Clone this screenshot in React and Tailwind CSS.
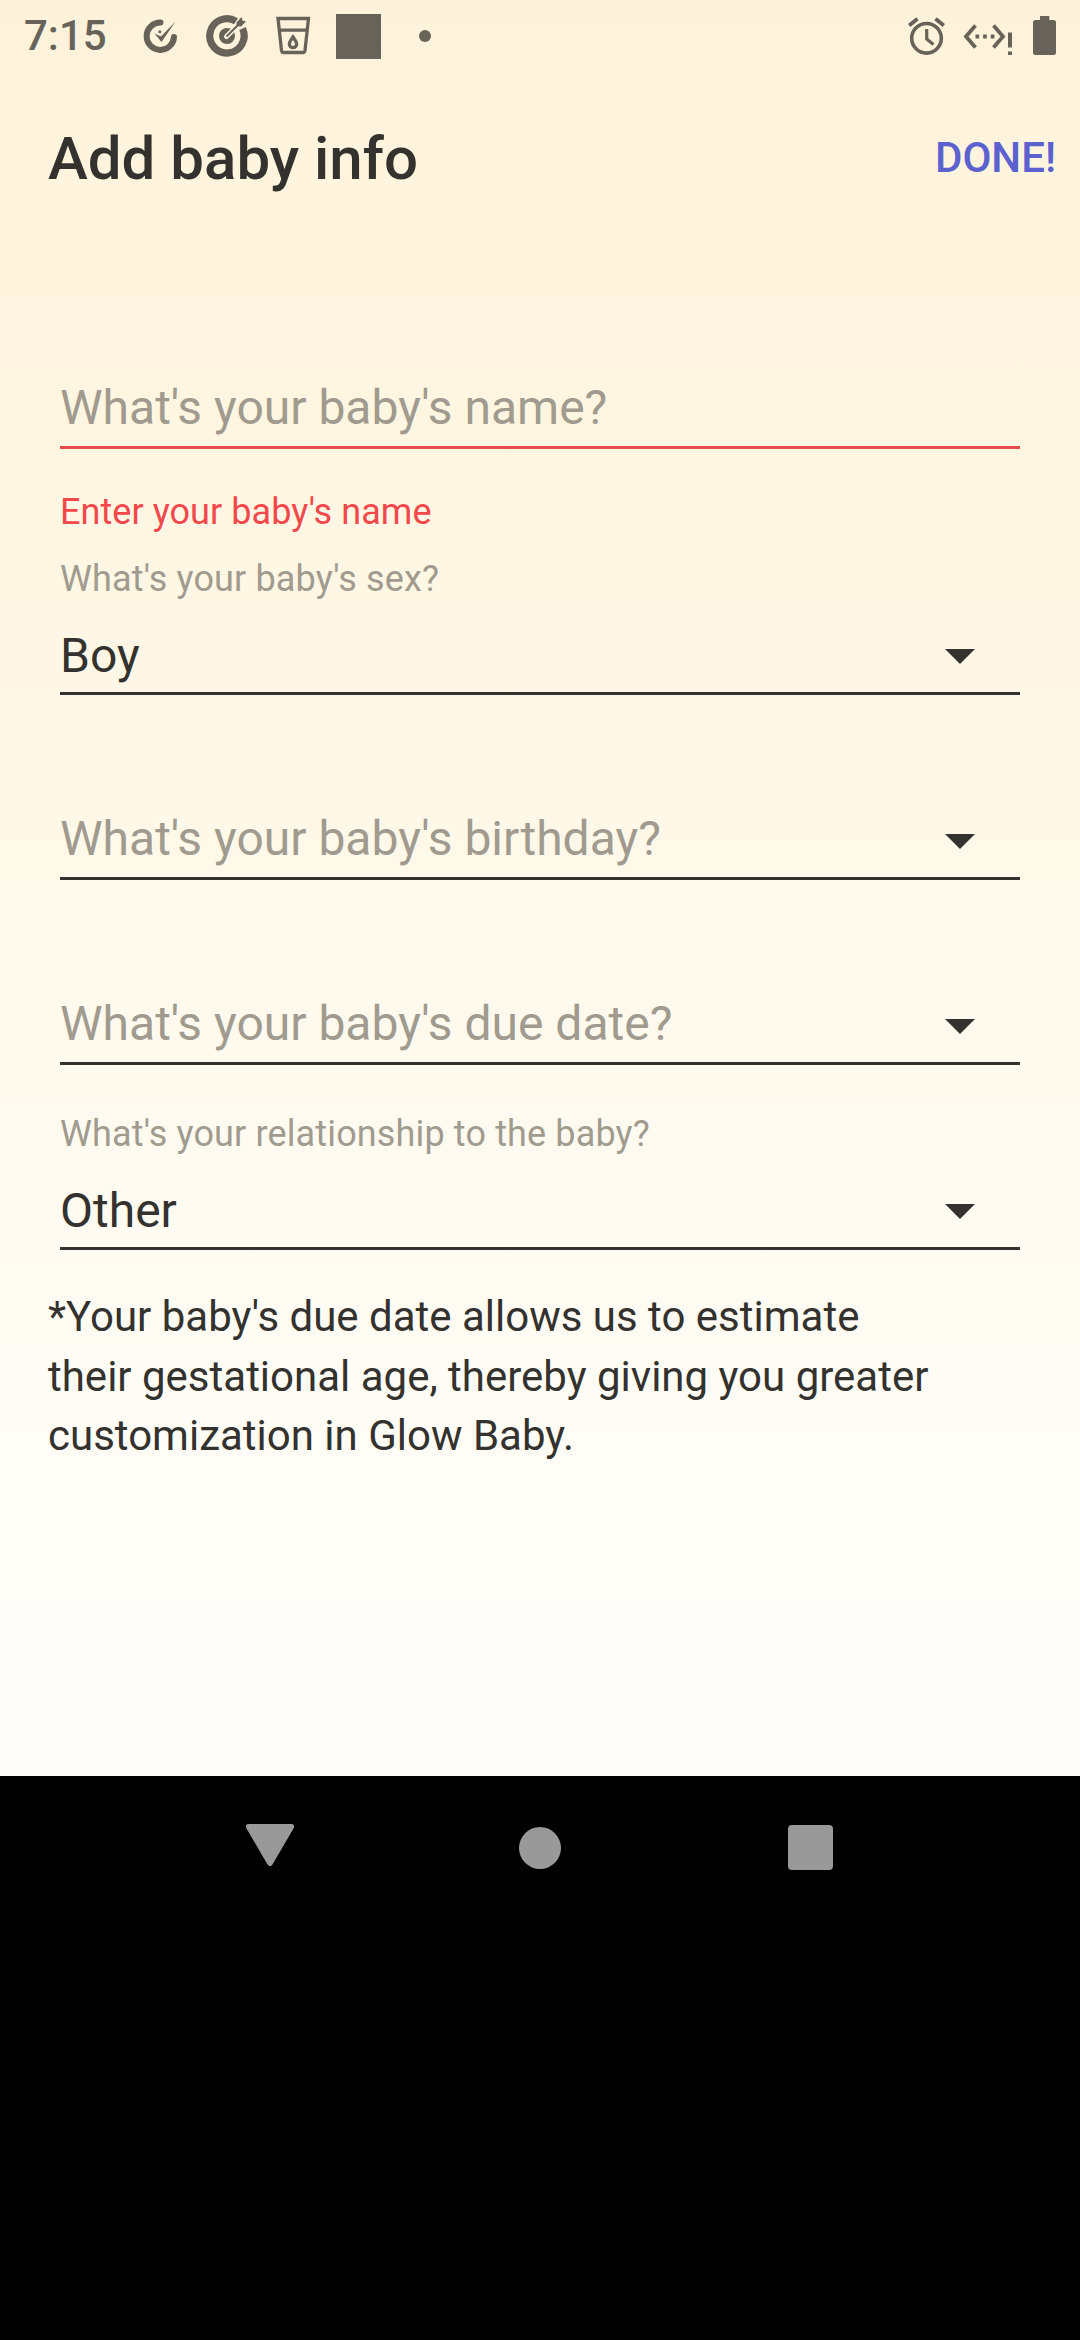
function StatusBar() {
  return (
    <header className="flex h-[72px] items-center text-[#676359]">
      <span className="ml-6 w-[113px] shrink-0 text-[42px] font-medium leading-[72px]">7:15</span>
      <svg className="h-[48px] w-[48px] shrink-0" viewBox="137 12 48 48" fill="none">
        <path d="M160.500 22.500A13.700 13.700 0 1 0 174 37" stroke="currentColor" strokeWidth="6" strokeLinecap="round" />
        <path d="M154.500 33.500L161 36.500L175.500 21.500L161.500 42Z" fill="currentColor" />
        <circle cx="159.800" cy="31.800" r="1.500" fill="currentColor" />
      </svg>
      <svg className="ml-[15px] h-[48px] w-[56px] shrink-0" viewBox="200 12 56 48" fill="none">
        <path d="M236 21.200A17.200 17.200 0 1 0 242.500 28.500" stroke="currentColor" strokeWidth="7.200" />
        <circle cx="227" cy="36" r="8" fill="currentColor" />
        <path d="M226.500 36.500L240 23" stroke="#fff2dc" strokeWidth="5" strokeLinecap="round" />
        <path d="M226.500 36.500L242 21" stroke="currentColor" strokeWidth="2" />
        <path d="M236.500 26V22.500L241.500 17L242.500 20.500L246 21.500L241 26.500Z" fill="currentColor" />
      </svg>
      <svg className="ml-[16px] h-[48px] w-[48px] shrink-0" viewBox="272 12 48 48" fill="none" stroke="currentColor" strokeWidth="3.300">
        <path d="M278 18.500H308.500L305 50.500Q304.700 52.500 302.700 52.500H283.800Q281.800 52.500 281.500 50.500ZM279.500 30.200H307" />
        <path d="M293 37C291 40 289.300 41.800 289.300 44A3.700 3.700 0 0 0 296.700 44C296.700 41.800 295 40 293 37Z" />
      </svg>
      <div className="ml-[16px] h-[45px] w-[45px] shrink-0 bg-current" />
      <div className="ml-[38px] h-3 w-3 shrink-0 rounded-full bg-current" />
      <div className="ml-auto flex items-center">
        <svg className="h-[48px] w-[40px]" viewBox="906 12 40 48" fill="none" stroke="currentColor">
          <circle cx="926.500" cy="38.300" r="14.800" strokeWidth="3.600" />
          <path d="M926.700 29V39L933.500 44.500" strokeWidth="3.200" />
          <path d="M909.200 25.500L917.500 18.800M935.500 18.800L943.800 25.500" strokeWidth="3.800" />
        </svg>
        <svg className="ml-[16px] h-[48px] w-[52px]" viewBox="962 12 52 48" fill="none" stroke="currentColor">
          <path d="M975.500 25.500L966 36.500L975.500 47.500M993.500 25.500L1003 36.500L993.500 47.500" strokeWidth="3.800" />
          <path d="M975.500 36.500H994.500" strokeWidth="3.800" strokeDasharray="3.700 3.900" />
          <path d="M1010 32.500V47.500M1010 51.500V55" strokeWidth="4" />
        </svg>
        <svg className="mr-6 ml-[19px] h-[48px] w-[23px]" viewBox="1033 12 23 48" fill="currentColor">
          <path d="M1040 16H1049.300V20H1053.500Q1056 20 1056 22.500V52.500Q1056 55 1053.500 55H1035.500Q1033 55 1033 52.500V22.500Q1033 20 1035.500 20H1040Z" />
        </svg>
      </div>
    </header>
  );
}

function Caret() {
  return (
    <svg className="mr-[45px] mb-[28px] h-[15px] w-[30px]" viewBox="0 0 30 15" fill="#33322e">
      <path d="M0 0H30L15 15Z" />
    </svg>
  );
}

function Field({ label, value, placeholder, dropdown = true, className }) {
  return (
    <div className={`flex flex-col justify-end border-b-[3px] ${className}`}>
      {label && <div className="text-[36px] leading-[42px] tracking-[0.14px] text-[#a09b8e]">{label}</div>}
      <div className="flex items-end justify-between">
        {value ? (
          <div className="mt-[28px] mb-[8px] text-[48px] leading-[56px] text-[#33322e]">{value}</div>
        ) : (
          <div className="mb-[10px] text-[48px] leading-[56px] text-[#a09b8e]">{placeholder}</div>
        )}
        {dropdown && <Caret />}
      </div>
    </div>
  );
}

function NavigationBar() {
  return (
    <nav className="flex h-[144px] justify-between pr-[247px] pl-[246px] text-[#999999]">
      <svg className="mt-12 h-[43px] w-12" viewBox="0 0 48 43" fill="currentColor">
        <path d="M3 0H45Q49.500 0 47.500 4.500L26.500 40.500Q24 44 21.500 40.500L.5 4.500Q-1.500 0 3 0Z" />
      </svg>
      <div className="mt-[51px] mr-[2px] h-[42px] w-[42px] rounded-full bg-current" />
      <div className="mt-[49px] h-[45px] w-[45px] rounded-[4px] bg-current" />
    </nav>
  );
}

export default function App() {
  return (
    <div className="flex h-[2340px] w-[1080px] flex-col bg-black font-['Roboto',sans-serif]">
      <main className="h-[1776px] bg-[linear-gradient(to_bottom,#fff2db_0%,#fff5df_16%,#fff7e6_38%,#fffaee_60%,#fffcf5_78%,#fffefb_100%)]">
        <StatusBar />
        <div className="flex h-[168px] items-center justify-between pr-6 pl-12">
          <h1 className="mt-[5px] text-[60px] font-medium leading-[72px] text-[#33322e]">Add baby info</h1>
          <button className="mt-[3px] text-[42px] font-medium leading-[48px] text-[#5b61cf]">DONE!</button>
        </div>
        <form className="mx-[60px]">
          <Field className="h-[209px] border-[#e84c4f]" placeholder="What's your baby's name?" dropdown={false} />
          <p className="mt-[42px] text-[36px] leading-[42px] tracking-[0.06px] text-[#f2484b]">Enter your baby's name</p>
          <Field className="h-[162px] border-[#33322e]" label="What's your baby's sex?" value="Boy" />
          <Field className="h-[185px] border-[#33322e]" placeholder="What's your baby's birthday?" />
          <Field className="h-[185px] border-[#33322e]" placeholder="What's your baby's due date?" />
          <Field className="h-[185px] border-[#33322e]" label="What's your relationship to the baby?" value="Other" />
        </form>
        <p className="mt-[37px] ml-12 w-[900px] text-[42px] leading-[59.500px] text-[#33322e]">
          *Your baby's due date allows us to estimate<br />
          their gestational age, thereby giving you greater<br />
          customization in Glow Baby.
        </p>
      </main>
      <NavigationBar />
    </div>
  );
}
